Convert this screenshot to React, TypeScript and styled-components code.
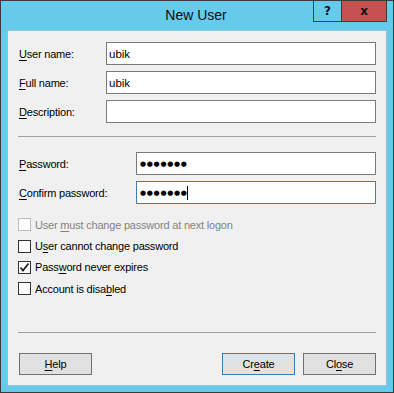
import React from 'react'
import styled, { createGlobalStyle } from 'styled-components'

const GlobalStyle = createGlobalStyle`
  html, body {
    margin: 0;
    padding: 0;
    width: 394px;
    height: 393px;
    overflow: hidden;
    background: #66cbea;
  }
  * {
    box-sizing: border-box;
  }
`

const Window = styled.div`
  width: 394px;
  height: 393px;
  border: 1px solid #3a3a3a;
  background-color: #66cbea;
  display: flex;
  flex-direction: column;
  font-family: "Liberation Sans", Arial, sans-serif;
  font-size: 11px;
  letter-spacing: -0.2px;
  color: #000;
`

const TitleBar = styled.div`
  height: 29px;
  display: grid;
  grid-template-columns: 1fr auto 1fr;
  align-items: start;
  padding-right: 6px;

  .title {
    grid-column: 2;
    font-size: 14px;
    letter-spacing: 0;
    line-height: 29px;
    color: #0b0b0b;
    padding-left: 4px;
  }
`

const CaptionButtons = styled.div`
  grid-column: 3;
  justify-self: end;
  display: flex;
  margin-top: -1px;
  height: 22px;
  border: 1px solid #3c3c3c;
`

const CaptionButton = styled.div<{ $close?: boolean }>`
  width: ${p => (p.$close ? '45px' : '27px')};
  height: 100%;
  background-color: ${p => (p.$close ? '#c75050' : '#66cbea')};
  border-left: ${p => (p.$close ? '1px solid #3c3c3c' : 'none')};
  display: flex;
  align-items: center;
  justify-content: center;
  font-family: "DejaVu Sans", sans-serif;
  font-weight: 700;
  font-size: 12px;
  letter-spacing: 0;
  color: #111;
  padding-bottom: 1px;
`

const Client = styled.div`
  flex: 1;
  margin: 0 6px 6px 6px;
  background-color: #f0f0f0;
  border: 1px solid #8ec3dc;
  padding: 11px 10px 0 11px;
  display: flex;
  flex-direction: column;
`

const FieldGroup = styled.div<{ $top?: number }>`
  display: flex;
  flex-direction: column;
  gap: 6px;
  margin-top: ${p => p.$top ?? 0}px;
`

const FieldRow = styled.div<{ $labelWidth: number }>`
  display: flex;
  align-items: center;
  height: 23px;

  label {
    width: ${p => p.$labelWidth}px;
    flex-shrink: 0;
    padding-top: 1px;
  }
`

const TextBox = styled.div<{ $focused?: boolean }>`
  flex: 1;
  height: 23px;
  background-color: #fff;
  border: 1px solid ${p => (p.$focused ? '#3c7fb1' : '#7a7a7a')};
  display: flex;
  align-items: center;
  padding-left: 2px;
  font-size: 11.5px;
  letter-spacing: 0;
`

const Dots = styled.span`
  font-family: "DejaVu Sans", sans-serif;
  font-size: 7px;
  letter-spacing: 0.7px;
  color: #000;
  padding-left: 1px;
`

const Caret = styled.span`
  display: inline-block;
  width: 1px;
  height: 14px;
  background-color: #000;
  margin-left: -1px;
`

const Separator = styled.div<{ $top: number }>`
  height: 1px;
  background-color: #a0a0a0;
  margin: ${p => p.$top}px 0 0 -1px;
`

const CheckList = styled.div`
  display: flex;
  flex-direction: column;
  margin-top: 10px;
`

const CheckRow = styled.div<{ $disabled?: boolean }>`
  height: 21.4px;
  display: flex;
  align-items: center;
  gap: 4px;
  margin-left: -1px;
  color: ${p => (p.$disabled ? '#838383' : '#000')};
`

const Box = styled.span<{ $disabled?: boolean }>`
  width: 13px;
  height: 13px;
  flex-shrink: 0;
  background-color: #fff;
  border: 1px solid ${p => (p.$disabled ? '#bcbcbc' : '#333')};
  display: flex;
  align-items: center;
  justify-content: center;
`

const ButtonBar = styled.div`
  display: flex;
  margin-top: 20px;
  gap: 8px;

  .spacer {
    flex: 1;
  }
`

const Button = styled.div<{ $default?: boolean }>`
  width: 73px;
  height: 22px;
  background-color: #e1e1e1;
  border: 1px solid ${p => (p.$default ? '#3c7fb1' : '#707070')};
  display: flex;
  align-items: center;
  justify-content: center;
  padding-top: 1px;
`

const Key = styled.span`
  text-decoration: underline;
  text-underline-offset: 2px;
`

type CheckProps = { checked?: boolean; disabled?: boolean; children: React.ReactNode }

const Check: React.FC<CheckProps> = ({ checked, disabled, children }) => (
  <CheckRow $disabled={disabled}>
    <Box $disabled={disabled}>
      {checked && (
        <svg width="11" height="11" viewBox="0 0 11 11">
          <polyline points="1.5,5.5 4,8.5 9.5,1.5" fill="none" stroke="#222" strokeWidth="1.8" />
        </svg>
      )}
    </Box>
    <span>{children}</span>
  </CheckRow>
)

const App: React.FC = () => {
  return (
    <>
      <GlobalStyle />
      <Window>
        <TitleBar>
          <div className="title">New User</div>
          <CaptionButtons>
            <CaptionButton>?</CaptionButton>
            <CaptionButton $close>x</CaptionButton>
          </CaptionButtons>
        </TitleBar>

        <Client>
          <FieldGroup>
            <FieldRow $labelWidth={87}>
              <label><Key>U</Key>ser name:</label>
              <TextBox>ubik</TextBox>
            </FieldRow>
            <FieldRow $labelWidth={87}>
              <label><Key>F</Key>ull name:</label>
              <TextBox>ubik</TextBox>
            </FieldRow>
            <FieldRow $labelWidth={87}>
              <label><Key>D</Key>escription:</label>
              <TextBox />
            </FieldRow>
          </FieldGroup>

          <Separator $top={13} />

          <FieldGroup $top={15}>
            <FieldRow $labelWidth={117}>
              <label><Key>P</Key>assword:</label>
              <TextBox><Dots>●●●●●●●</Dots></TextBox>
            </FieldRow>
            <FieldRow $labelWidth={117}>
              <label><Key>C</Key>onfirm password:</label>
              <TextBox $focused><Dots>●●●●●●●</Dots><Caret /></TextBox>
            </FieldRow>
          </FieldGroup>

          <CheckList>
            <Check disabled>User <Key>m</Key>ust change password at next logon</Check>
            <Check>U<Key>s</Key>er cannot change password</Check>
            <Check checked>Pass<Key>w</Key>ord never expires</Check>
            <Check>Account is disa<Key>b</Key>led</Check>
          </CheckList>

          <Separator $top={32} />

          <ButtonBar>
            <Button><span><Key>H</Key>elp</span></Button>
            <div className="spacer" />
            <Button $default><span>Cr<Key>e</Key>ate</span></Button>
            <Button><span>Cl<Key>o</Key>se</span></Button>
          </ButtonBar>
        </Client>
      </Window>
    </>
  )
}

export default App
